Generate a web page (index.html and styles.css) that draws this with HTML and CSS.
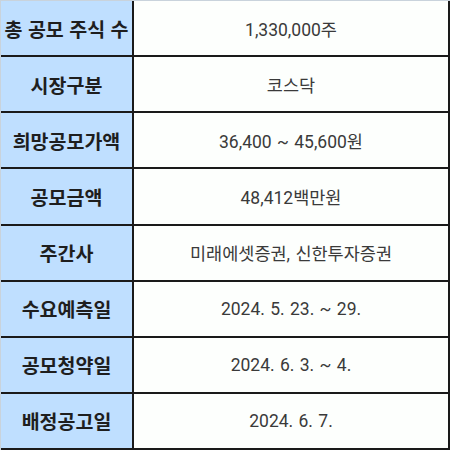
FILE: index.html
```html
<!DOCTYPE html>
<html lang="ko">
<head>
<meta charset="utf-8">
<link rel="stylesheet" href="styles.css">
</head>
<body>
<div class="table">
  <div class="th">총 공모 주식 수</div><div class="td">1,330,000주</div>
  <div class="th">시장구분</div><div class="td">코스닥</div>
  <div class="th">희망공모가액</div><div class="td">36,400 ~ 45,600원</div>
  <div class="th">공모금액</div><div class="td">48,412백만원</div>
  <div class="th">주간사</div><div class="td">미래에셋증권, 신한투자증권</div>
  <div class="th">수요예측일</div><div class="td">2024. 5. 23. ~ 29.</div>
  <div class="th">공모청약일</div><div class="td">2024. 6. 3. ~ 4.</div>
  <div class="th">배정공고일</div><div class="td">2024. 6. 7.</div>
</div>
</body>
</html>
```
FILE: styles.css
```css
html, body {
  margin: 0;
  padding: 0;
  background: #ffffff;
}
.table {
  width: 450px;
  height: 450px;
  box-sizing: border-box;
  display: grid;
  grid-template-columns: 131px 1fr;
  grid-template-rows: repeat(8, 1fr);
  gap: 2px;
  background: #1a1a1a;
  border-top: 1px solid #c9d3dc;
  border-left: 1px solid #c9d3dc;
  padding: 0 2px 2px 0;
}
.th {
  background: #bfdfff;
  display: flex;
  align-items: center;
  justify-content: center;
  font-family: "Noto Sans CJK KR", "Noto Sans", sans-serif;
  font-weight: 700;
  font-size: 19.5px;
  color: #1e1e1e;
  white-space: nowrap;
}
.td {
  background: #fdfffd;
  display: flex;
  align-items: center;
  justify-content: center;
  font-family: Roboto, "Noto Sans CJK KR", sans-serif;
  font-weight: 400;
  font-size: 17.5px;
  color: #3a3a3a;
  word-spacing: 1px;
  white-space: nowrap;
}
```
